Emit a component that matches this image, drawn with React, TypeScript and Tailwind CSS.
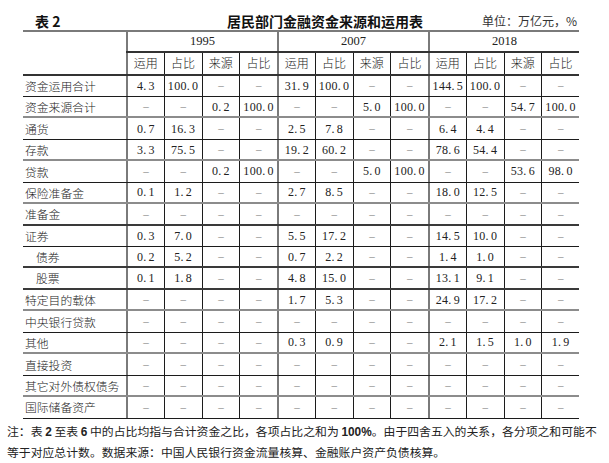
import React from 'react';

const D = '–';

type Row = { label: string; indent?: boolean; cells: string[]; line: 'k' | 'g' | 'K' };

const all = Array(12).fill(D);

const rows: Row[] = [
  { label: '资金运用合计', cells: ['4.3', '100.0', D, D, '31.9', '100.0', D, D, '144.5', '100.0', D, D], line: 'k' },
  { label: '资金来源合计', cells: [D, D, '0.2', '100.0', D, D, '5.0', '100.0', D, D, '54.7', '100.0'], line: 'g' },
  { label: '通货', cells: ['0.7', '16.3', D, D, '2.5', '7.8', D, D, '6.4', '4.4', D, D], line: 'k' },
  { label: '存款', cells: ['3.3', '75.5', D, D, '19.2', '60.2', D, D, '78.6', '54.4', D, D], line: 'g' },
  { label: '贷款', cells: [D, D, '0.2', '100.0', D, D, '5.0', '100.0', D, D, '53.6', '98.0'], line: 'k' },
  { label: '保险准备金', cells: ['0.1', '1.2', D, D, '2.7', '8.5', D, D, '18.0', '12.5', D, D], line: 'g' },
  { label: '准备金', cells: all, line: 'K' },
  { label: '证券', cells: ['0.3', '7.0', D, D, '5.5', '17.2', D, D, '14.5', '10.0', D, D], line: 'k' },
  { label: '债券', indent: true, cells: ['0.2', '5.2', D, D, '0.7', '2.2', D, D, '1.4', '1.0', D, D], line: 'K' },
  { label: '股票', indent: true, cells: ['0.1', '1.8', D, D, '4.8', '15.0', D, D, '13.1', '9.1', D, D], line: 'K' },
  { label: '特定目的载体', cells: [D, D, D, D, '1.7', '5.3', D, D, '24.9', '17.2', D, D], line: 'g' },
  { label: '中央银行贷款', cells: all, line: 'k' },
  { label: '其他', cells: [D, D, D, D, '0.3', '0.9', D, D, '2.1', '1.5', '1.0', '1.9'], line: 'g' },
  { label: '直接投资', cells: all, line: 'k' },
  { label: '其它对外债权债务', cells: all, line: 'g' },
  { label: '国际储备资产', cells: all, line: 'k' },
];

const subHeads = ['运用', '占比', '来源', '占比'];
const years = ['1995', '2007', '2018'];

const lineCls = {
  k: 'border-b border-[#1c1c1c]',
  g: 'border-b-2 border-[#8c8c8c]',
  K: 'border-b-2 border-[#3a3a3a]',
};

const cjk = "font-['Noto_Sans_CJK_SC',sans-serif]";
const serif = "font-['Liberation_Serif','Noto_Sans_CJK_SC',serif]";

function colBorder(i: number) {
  return i % 4 === 0 ? 'border-l-2 border-[#7a7a7a]' : 'border-l border-[#1c1c1c]';
}

// the source font sets a wide full stop: "4. 3"
function Num({ v }: { v: string }) {
  const [a, b] = v.split('.');
  return (
    <span>
      {a}
      <span className="mr-[2px]">.</span>
      {b}
    </span>
  );
}

export default function App() {
  return (
    <div className={`w-[609px] h-[463px] bg-white text-[#222] overflow-hidden ${cjk}`}>
      {/* title */}
      <div className="flex h-[30px] pt-[12px] leading-[18px]">
        <span className="w-[227px] pl-[35px] text-[14px] font-bold text-[#111]">表 2</span>
        <span className="w-[255px] text-[14px] font-bold text-[#111]">居民部门金融资金来源和运用表</span>
        <span className="text-[12px] text-[#333]">单位：万亿元，%</span>
      </div>

      <div className="ml-[23px] w-[556px] border-t-2 border-[#7a7a7a]">
        {/* header */}
        <div className="flex border-b-2 border-[#333]">
          <div className="w-[103px] h-[41.5px]" />
          <div className="flex flex-col w-[453px]">
            <div className="flex h-[21px] border-b-2 border-[#333]">
              {years.map((y) => (
                <div key={y} className={`w-[151px] flex items-center justify-center text-[12.5px] ${serif} border-l-2 border-[#7a7a7a]`}>
                  {y}
                </div>
              ))}
            </div>
            <div className="flex h-[20.5px]">
              {years.flatMap(() => subHeads).map((h, i) => (
                <div key={i} className={`w-[37.75px] flex items-center justify-center text-[12px] font-light ${colBorder(i)}`}>
                  {h}
                </div>
              ))}
            </div>
          </div>
        </div>

        {/* body */}
        {rows.map((r) => (
          <div key={r.label} className={`flex h-[21.44px] ${lineCls[r.line]}`}>
            <div className={`w-[103px] flex items-center text-[11.8px] font-light ${r.indent ? 'pl-[13px]' : 'pl-[2px]'}`}>
              {r.label}
            </div>
            {r.cells.map((c, i) => (
              <div
                key={i}
                className={`w-[37.75px] flex items-center justify-center ${serif} ${colBorder(i)} ${
                  c === D ? 'text-[11px] text-[#777]' : 'text-[12px] tracking-[0.3px]'
                }`}
              >
                {c === D ? c : <Num v={c} />}
              </div>
            ))}
          </div>
        ))}
      </div>

      {/* note */}
      <div className="pl-[7px] pt-[2px] text-[11.85px] leading-[20px] text-[#222]">
        <div className="whitespace-nowrap">
          注：表 <b className="font-['Liberation_Sans',sans-serif]">2</b> 至表 <b className="font-['Liberation_Sans',sans-serif]">6</b> 中的占比均指与合计资金之比，各项占比之和为 <b className="font-['Liberation_Sans',sans-serif]">100%</b>。由于四舍五入的关系，各分项之和可能不
        </div>
        <div>等于对应总计数。数据来源：中国人民银行资金流量核算、金融账户资产负债核算。</div>
      </div>
    </div>
  );
}
